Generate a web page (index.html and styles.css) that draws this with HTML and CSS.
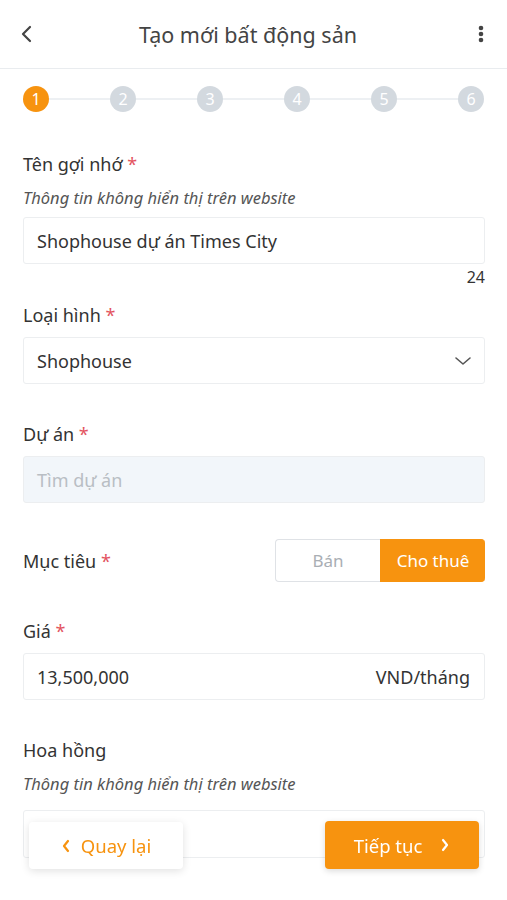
FILE: index.html
```html
<!DOCTYPE html>
<html lang="vi">
<head>
    <meta charset="utf-8">
    <title>Tạo mới bất động sản</title>
    <link rel="stylesheet" href="styles.css">
</head>
<body>
    <div class="header">
        <span class="back">
            <svg width="14" height="20" viewBox="0 0 14 20"><path d="M10 3 L3 10 L10 17" fill="none" stroke="#444" stroke-width="2.2" stroke-linecap="round" stroke-linejoin="round"/></svg>
        </span>
        <h1>Tạo mới bất động sản</h1>
        <span class="more">
            <svg width="6" height="20" viewBox="0 0 6 20"><circle cx="3" cy="4" r="2.3" fill="#444"/><circle cx="3" cy="10" r="2.3" fill="#444"/><circle cx="3" cy="16" r="2.3" fill="#444"/></svg>
        </span>
    </div>

    <div class="steps">
        <span class="step active">1</span>
        <span class="step">2</span>
        <span class="step">3</span>
        <span class="step">4</span>
        <span class="step">5</span>
        <span class="step">6</span>
    </div>

    <div class="form">
        <label class="label first">Tên gợi nhớ <span class="req">*</span></label>
        <div class="hint">Thông tin không hiển thị trên website</div>
        <div class="input">Shophouse dự án Times City</div>
        <div class="counter">24</div>

        <label class="label after-counter">Loại hình <span class="req">*</span></label>
        <div class="input select">
            <span>Shophouse</span>
            <svg width="18" height="10" viewBox="0 0 18 10"><path d="M2 2 L9 8 L16 2" fill="none" stroke="#555" stroke-width="1.6" stroke-linecap="round" stroke-linejoin="round"/></svg>
        </div>

        <label class="label">Dự án <span class="req">*</span></label>
        <div class="input disabled">Tìm dự án</div>

        <div class="target-row">
            <label class="label inline">Mục tiêu <span class="req">*</span></label>
            <div class="segment">
                <span class="seg">Bán</span>
                <span class="seg on">Cho thuê</span>
            </div>
        </div>

        <label class="label price">Giá <span class="req">*</span></label>
        <div class="input split">
            <span>13,500,000</span>
            <span>VND/tháng</span>
        </div>

        <label class="label">Hoa hồng</label>
        <div class="hint">Thông tin không hiển thị trên website</div>
        <div class="input last"></div>
    </div>

    <div class="bottom-bar">
        <button class="btn btn-back">
            <svg width="10" height="16" viewBox="0 0 10 16"><path d="M7 3 L3 8 L7 13" fill="none" stroke="#f7930f" stroke-width="2.2" stroke-linecap="round" stroke-linejoin="round"/></svg>
            Quay lại
        </button>
        <button class="btn btn-next">
            Tiếp tục
            <svg width="10" height="16" viewBox="0 0 10 16"><path d="M3 3 L7 8 L3 13" fill="none" stroke="#fff" stroke-width="2.2" stroke-linecap="round" stroke-linejoin="round"/></svg>
        </button>
    </div>
</body>
</html>
```

FILE: styles.css
```css
body { margin: 0; background: #fff; font-family: "Noto Sans", "Open Sans", sans-serif; color: #333; width: 507px; }

.header { height: 69px; border-bottom: 1px solid #e9ecef; display: flex; align-items: center; justify-content: space-between; padding: 0 23px 0 20px; box-sizing: border-box; }
.header h1 { margin: 0; font-size: 21.5px; font-weight: 400; color: #444; padding-right: 8px; }
.back, .more { display: flex; align-items: center; width: 14px; }
.more { justify-content: flex-end; }

.steps { position: relative; display: flex; justify-content: space-between; margin: 17px 23px 0; }
.steps::before { content: ""; position: absolute; left: 10px; right: 10px; top: 12px; height: 2px; background: #edf0f3; }
.step { position: relative; width: 26px; height: 26px; border-radius: 50%; background: #d3d9df; color: #fff; font-size: 16px; display: flex; align-items: center; justify-content: center; }
.step.active { background: #f7930f; }

.form { padding: 0 22px 0 23px; display: flex; flex-direction: column; }
.label { font-size: 18px; line-height: 24px; height: 24px; margin-top: 38px; display: block; }
.label.first { margin-top: 40px; }
.label.after-counter { margin-top: 17px; }
.label.price { margin-top: 37px; }
.label.inline { margin-top: 0; }
.req { color: #e3545f; }
.hint { font-size: 16.5px; line-height: 20px; height: 20px; font-style: italic; color: #555; margin-top: 12px; }

.input { height: 47px; box-sizing: border-box; border: 1px solid #eceef0; border-radius: 3px; margin-top: 10px; padding: 0 14px 0 13px; display: flex; align-items: center; font-size: 18px; background: #fff; }
.hint + .input { margin-top: 9px; }
.input.select { justify-content: space-between; padding-right: 12px; }
.input.disabled { background: #f2f6fa; color: #b9bec4; }
.input.split { justify-content: space-between; }
.input.last { margin-top: 16px; height: 48px; }
.counter { text-align: right; font-size: 16px; line-height: 18px; height: 18px; margin-top: 4px; }

.target-row { display: flex; align-items: center; justify-content: space-between; margin-top: 36px; }
.segment { display: flex; width: 210px; height: 43px; }
.seg { flex: 1; display: flex; align-items: center; justify-content: center; font-size: 17px; color: #a9aeb4; border: 1px solid #dfe2e6; border-right: none; border-radius: 4px 0 0 4px; }
.seg.on { background: #f7930f; color: #fff; border-color: #f7930f; border-radius: 0 4px 4px 0; }

.bottom-bar { position: fixed; left: 29px; right: 28px; bottom: 31px; display: flex; justify-content: space-between; align-items: flex-end; }
.btn { width: 154px; height: 47px; border: none; border-radius: 4px; font-family: inherit; font-size: 18.5px; display: flex; align-items: center; justify-content: center; gap: 12px; cursor: pointer; }
.btn-back { background: #fff; color: #f7930f; box-shadow: 0 2px 8px rgba(0,0,0,0.12); gap: 10px; }
.btn-next { background: #f7930f; color: #fff; height: 48px; gap: 18px; box-shadow: 0 2px 6px rgba(0,0,0,0.15); }
```
